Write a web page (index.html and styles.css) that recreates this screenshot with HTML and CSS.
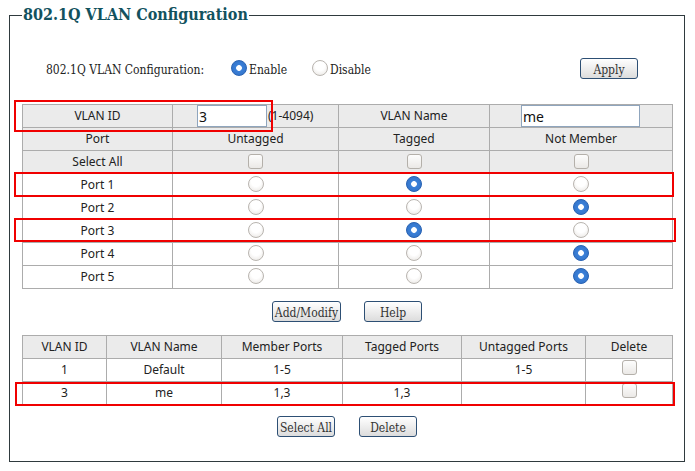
FILE: index.html
```html
<!DOCTYPE html>
<html>
<head>
<meta charset="utf-8">
<link rel="stylesheet" href="styles.css">
</head>
<body>
<fieldset class="panel">
  <legend class="panel-title">802.1Q VLAN Configuration</legend>
  <div class="mode-row">
    <span class="mode-label">802.1Q VLAN Configuration:</span>
    <label class="opt"><input type="radio" class="radio" name="mode" checked>Enable</label>
    <label class="opt opt-disable"><input type="radio" class="radio" name="mode">Disable</label>
    <button class="btn btn-apply">Apply</button>
  </div>

  <div class="area area-cfg">
    <table class="grid cfg">
      <colgroup><col class="c1"><col class="c2"><col class="c3"><col class="c4"></colgroup>
      <tr class="head">
        <td>VLAN ID</td>
        <td class="idcell"><input type="text" class="field field-id" value="3"><span class="range">(1-4094)</span></td>
        <td>VLAN Name</td>
        <td class="namecell"><input type="text" class="field field-name" value="me"></td>
      </tr>
      <tr class="head"><td>Port</td><td>Untagged</td><td>Tagged</td><td>Not Member</td></tr>
      <tr class="head"><td>Select All</td><td><span class="check"></span></td><td><span class="check"></span></td><td><span class="check"></span></td></tr>
      <tr><td>Port 1</td><td><span class="rb"></span></td><td><span class="rb on"></span></td><td><span class="rb"></span></td></tr>
      <tr><td>Port 2</td><td><span class="rb"></span></td><td><span class="rb"></span></td><td><span class="rb on"></span></td></tr>
      <tr><td>Port 3</td><td><span class="rb"></span></td><td><span class="rb on"></span></td><td><span class="rb"></span></td></tr>
      <tr><td>Port 4</td><td><span class="rb"></span></td><td><span class="rb"></span></td><td><span class="rb on"></span></td></tr>
      <tr><td>Port 5</td><td><span class="rb"></span></td><td><span class="rb"></span></td><td><span class="rb on"></span></td></tr>
    </table>
    <div class="mark mark-id"></div>
    <div class="mark mark-p1"></div>
    <div class="mark mark-p3"></div>
  </div>

  <div class="btn-row btn-row-1">
    <button class="btn btn-add">Add/Modify</button>
    <button class="btn btn-help">Help</button>
  </div>

  <div class="area area-list">
    <table class="grid list">
      <colgroup><col class="d1"><col class="d2"><col class="d3"><col class="d4"><col class="d5"><col class="d6"></colgroup>
      <tr class="head"><td>VLAN ID</td><td>VLAN Name</td><td>Member Ports</td><td>Tagged Ports</td><td>Untagged Ports</td><td>Delete</td></tr>
      <tr><td>1</td><td>Default</td><td>1-5</td><td></td><td>1-5</td><td><span class="check"></span></td></tr>
      <tr><td>3</td><td>me</td><td>1,3</td><td>1,3</td><td></td><td><span class="check"></span></td></tr>
    </table>
    <div class="mark mark-row"></div>
  </div>

  <div class="btn-row btn-row-2">
    <button class="btn btn-selall">Select All</button>
    <button class="btn btn-del">Delete</button>
  </div>
</fieldset>
</body>
</html>
```
FILE: styles.css
```css
html, body {
  margin: 0;
  padding: 0;
  background: #fff;
}
body {
  padding: 6px 10px 0 9px;
  font-family: "DejaVu Serif Condensed", "DejaVu Serif", serif;
  font-stretch: condensed;
}
.panel {
  margin: 0;
  width: 676px;
  height: 456px;
  box-sizing: border-box;
  border: 1px solid #2f3a3e;
  padding: 0 0 0 12px;
}
.panel-title {
  padding: 0 1px;
  margin-left: 0;
  font-family: "DejaVu Serif Condensed", "DejaVu Serif", serif;
  font-stretch: condensed;
  font-weight: bold;
  font-size: 16px;
  color: #12525e;
  line-height: 18px;
}
.mode-row {
  display: flex;
  align-items: center;
  height: 21px;
  margin-top: 34px;
  font-size: 12px;
  color: #222;
  white-space: nowrap;
}
.mode-label {
  margin-left: 24px;
  width: 185px;
  padding-top: 3px;
  line-height: 14px;
}
.opt {
  display: flex;
  align-items: center;
  line-height: 14px;
  padding-top: 3px;
}
.opt-disable {
  margin-left: 25px;
}
.radio {
  appearance: none;
  -webkit-appearance: none;
  margin: -5px 2px 0 0;
  width: 16px;
  height: 16px;
  border-radius: 50%;
  box-sizing: border-box;
  border: 1px solid #b9b5b0;
  background: radial-gradient(circle at 50% 35%, #ffffff 40%, #e6e3df 100%);
}
.radio:checked,
.rb.on {
  border: 1px solid #2a63b3;
  background: radial-gradient(circle, #ffffff 0 2.5px, #3b80d8 3.2px, #2f6fc4 100%);
}
.btn {
  font-family: "DejaVu Serif Condensed", "DejaVu Serif", serif;
  font-stretch: condensed;
  font-size: 12px;
  color: #333;
  height: 21px;
  padding: 2px 0 0;
  border: 1px solid #2d4f74;
  border-radius: 3px;
  background: linear-gradient(#ffffff, #ececec 55%, #dcdcdc);
  box-sizing: border-box;
  white-space: nowrap;
}
.btn-apply {
  margin-left: auto;
  margin-right: 46px;
  width: 58px;
}
.area {
  position: relative;
  width: 650px;
}
.area-cfg {
  margin-top: 25px;
}
.area-list {
  margin-top: 13px;
}
.grid {
  border-collapse: collapse;
  width: 650px;
  table-layout: fixed;
  font-family: "Noto Sans", sans-serif;
  font-size: 12px;
  color: #222;
}
.grid td {
  border: 1px solid #acacac;
  height: 22px;
  padding: 0;
  text-align: center;
  vertical-align: middle;
  line-height: 14px;
  white-space: nowrap;
  overflow: visible;
}
.grid .head td {
  background: #ebebeb;
}
.c1 { width: 150px; }
.c2 { width: 166px; }
.c3 { width: 151px; }
.c4 { width: 183px; }
.grid .idcell,
.grid .namecell {
  text-align: left;
}
.field {
  font-family: "Noto Sans", sans-serif;
  font-size: 14px;
  height: 22px;
  box-sizing: border-box;
  border: 1px solid #8fa5bd;
  padding: 0 1px;
  margin: 0;
  vertical-align: middle;
  color: #111;
}
.field-id {
  width: 70px;
  margin-left: 24px;
}
.field-name {
  width: 119px;
  margin-left: 31px;
  display: block;
}
.range {
  margin-left: 1px;
  vertical-align: middle;
}
.check {
  display: inline-block;
  width: 15px;
  height: 15px;
  box-sizing: border-box;
  border: 1px solid #b4b0aa;
  border-radius: 3px;
  background: linear-gradient(#fdfdfd, #ebe9e6);
  vertical-align: middle;
  margin-top: -3px;
}
.rb {
  display: inline-block;
  width: 16px;
  height: 16px;
  box-sizing: border-box;
  border-radius: 50%;
  border: 1px solid #b9b5b0;
  background: radial-gradient(circle at 50% 35%, #ffffff 40%, #e6e3df 100%);
  vertical-align: middle;
  margin-top: -4px;
}
.mark {
  position: absolute;
  border: 2px solid #f00000;
  box-sizing: border-box;
}
.mark-id { left: -8px; top: -4px; width: 259px; height: 32px; }
.mark-p1 { left: -8px; top: 68px; width: 660px; height: 25px; }
.mark-p3 { left: -8px; top: 114px; width: 662px; height: 24px; }
.mark-row { left: -7px; top: 47px; width: 660px; height: 24px; }
.btn-row {
  display: flex;
  margin-top: 12px;
}
.btn-row-1 .btn-add { margin-left: 250px; width: 69px; }
.btn-row-1 .btn-help { margin-left: 23px; width: 58px; }
.d1 { width: 84px; }
.d2 { width: 115px; }
.d3 { width: 121px; }
.d4 { width: 119px; }
.d5 { width: 124px; }
.d6 { width: 87px; }
.list .check { margin-top: -6px; }
.btn-row-2 { margin-top: 11px; }
.btn-row-2 .btn-selall { margin-left: 255px; width: 58px; }
.btn-row-2 .btn-del { margin-left: 24px; width: 58px; }
```
